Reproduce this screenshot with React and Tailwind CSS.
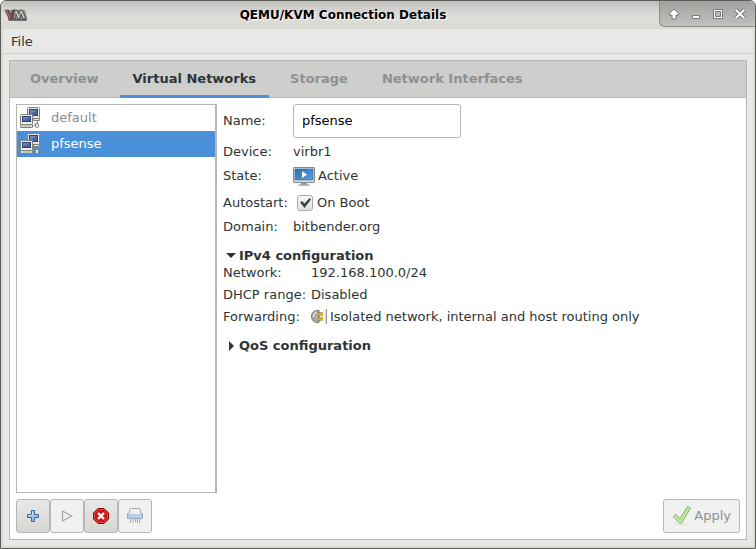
import React from "react";

function VmLogo() {
  return (
    <svg width="22" height="12" viewBox="0 0 22 12" className="shrink-0" aria-hidden="true">
      <path d="M3 11.500H22V8L20 1H1L3 7Z" fill="#9a9a98" />
      <path d="M0 1H3.500L5.500 6L7.500 1H10L7 10H4Z" fill="#7d4550" stroke="#444" strokeWidth=".6" />
      <path d="M1.500 1.500L5 9" stroke="#c08a94" strokeWidth=".8" />
      <path d="M8 10L9.500 1H12L13.500 5L14.500 1H17.500L21 10H18L16 5L15 10H13L11 5L10.500 10Z" fill="#a5a5a3" stroke="#3c3c3c" strokeWidth=".8" />
      <path d="M11 2L13.500 9M16 2L19 9" stroke="#e4e4e2" strokeWidth=".8" />
      <path d="M3.500 11H22" stroke="#333" />
    </svg>
  );
}

function NetworkIcon() {
  return (
    <svg width="22" height="22" viewBox="0 0 22 22" className="shrink-0" aria-hidden="true">
      <rect x="8.500" y=".5" width="12" height="11" rx="1" fill="#e6e6e2" stroke="#83837c" />
      <rect x="10.500" y="2.500" width="8" height="6" fill="#4a67a0" stroke="#2c4074" />
      <path d="M11 3H18L11 7Z" fill="#6d88b8" />
      <path d="M14.500 11.500H20.500V13.500H14.500Z" fill="#e6e6e2" stroke="#83837c" />
      <rect x="1.500" y="7.500" width="12" height="10" rx="1" fill="#f0f0ed" stroke="#83837c" />
      <rect x="3.500" y="9.500" width="8" height="5" fill="#4a67a0" stroke="#2c4074" />
      <path d="M4 10H11L4 13.500Z" fill="#6d88b8" />
      <path d="M1.500 17.500H13.500V20.500H1.500Z" fill="#e6e6e2" stroke="#83837c" />
      <path d="M3 19H12" stroke="#aaa" />
      <path d="M14.500 18.500H16.500V16.500H18.500V13.500" fill="none" stroke="#83837c" />
      <rect x="16.500" y="16.500" width="3" height="4" rx="1" fill="#e6e6e2" stroke="#83837c" />
    </svg>
  );
}

function ActiveIcon() {
  return (
    <svg width="22" height="22" viewBox="0 0 22 22" aria-hidden="true">
      <defs>
        <linearGradient id="screen" x2="1" y2="1">
          <stop stopColor="#266eb5" />
          <stop offset="1" stopColor="#5ca2dc" />
        </linearGradient>
      </defs>
      <rect x=".5" y="2.500" width="21" height="15" rx=".5" fill="#ddd" stroke="#888a85" />
      <rect x="2" y="4" width="18" height="11" fill="url(#screen)" stroke="#2f71ad" strokeWidth=".6" />
      <path d="M9 6L14 9.500L9 13Z" fill="#fff" />
      <path d="M8 18H14V19.500H8Z" fill="#999" />
      <path d="M5.500 20H16.500" stroke="#777" />
    </svg>
  );
}

function PlugIcon() {
  return (
    <svg width="16" height="16" viewBox="0 0 16 16" aria-hidden="true">
      <path d="M8 1.500V13.500H5.500Q.5 12.500 .5 7.500T5.500 1.500Z" fill="#a8a9a6" stroke="#777" />
      <path d="M5.500 3Q2.500 5 2.500 8" fill="none" stroke="#e4e4e4" strokeWidth="1.500" />
      <path d="M7 5H12M7 10H12" stroke="#746000" strokeWidth="3" />
      <path d="M7 5H12M7 10H12" stroke="#f0cf28" strokeWidth="1.500" />
      <path d="M13.500 0H16V15H13.500Z" fill="#e0e0e0" />
      <path d="M15.500 0V15" stroke="#999" />
    </svg>
  );
}

function AddIcon() {
  return (
    <svg width="16" height="16" viewBox="0 0 16 16" aria-hidden="true">
      <path d="M6.500 2.500H9.500V6.500H13.500V9.500H9.500V13.500H6.500V9.500H2.500V6.500H6.500Z" fill="#9dbee3" stroke="#3465a4" strokeLinejoin="round" />
      <path d="M7.500 3.500V7.500H3.500" fill="none" stroke="#d2e2f3" />
    </svg>
  );
}

function StartIcon() {
  return (
    <svg width="16" height="16" viewBox="0 0 16 16" aria-hidden="true">
      <path d="M3.500 3L13 8L3.500 13Z" fill="#eee" stroke="#a4a6a3" strokeWidth="1.200" strokeLinejoin="round" />
    </svg>
  );
}

function StopIcon() {
  return (
    <svg width="16" height="16" viewBox="0 0 16 16" aria-hidden="true">
      <path d="M5 .5H11L15.500 5V11L11 15.500H5L.5 11V5Z" fill="#cc1515" stroke="#930000" />
      <path d="M5.400 1.500H10.600L14.500 5.400V10.600L10.600 14.500H5.400L1.500 10.600V5.400Z" fill="none" stroke="#ef5555" strokeWidth=".8" />
      <path d="M5 5L11 11M11 5L5 11" stroke="#fff" strokeWidth="2.400" />
    </svg>
  );
}

function DeleteIcon() {
  return (
    <svg width="16" height="16" viewBox="0 0 16 16" aria-hidden="true">
      <path d="M2.500 6V1.500Q2.500 .5 3.500 .5H12.500Q13.500 .5 13.500 1.500V6" fill="#eee" stroke="#aaa" />
      <path d="M.5 5.500H15.500V10.500H.5Z" fill="#b9cce3" stroke="#8ca7c7" />
      <path d="M2 5.500H14" stroke="#e8eef5" />
      <path d="M3.500 10V14L2.500 15M6 10V15M8.500 10V14M10.500 10V15M12.500 10V14L13.500 15" fill="none" stroke="#aaa" />
    </svg>
  );
}

function ApplyIcon() {
  return (
    <svg width="20" height="20" viewBox="0 0 20 20" aria-hidden="true">
      <ellipse cx="10" cy="18" rx="8" ry="1.500" fill="#e6e6e6" />
      <path d="M1 10.500L4 8.500L8 12.500L15.500 .5L18.500 2L9.500 17H7.500Z" fill="#c8eba7" stroke="#87b565" strokeLinejoin="round" />
      <path d="M3.500 10.500L8.500 14.500L16 2.500" fill="none" stroke="#b1df88" />
    </svg>
  );
}

const winButton = "flex size-4 items-center justify-center";

function TitleBar() {
  return (
    <header className="flex h-7 shrink-0 items-center bg-linear-to-b from-[#c0bfbc] via-[#dedddb] to-[#dadad3] pl-1">
      <VmLogo />
      <h1 className="flex-1 text-center text-xs font-bold text-black [text-shadow:1px_1px_0_#fff]">QEMU/KVM Connection Details</h1>
      <div className="flex self-start">
        <div className="flex h-[26px] items-center gap-[6px] rounded-bl-md border-b border-l border-[#8c8c87] bg-linear-to-b from-[#a3a19f] to-[#c3c1be] pr-[7px] pl-[6px]">
          <button className={winButton} aria-label="Shade">
            <svg width="12" height="12" viewBox="0 0 12 12"><path d="M6 1L10.500 5.500V7H8V11H4V7H1.500V5.500Z" fill="#fff" stroke="#777" /></svg>
          </button>
          <button className={winButton} aria-label="Minimize">
            <svg width="12" height="12" viewBox="0 0 12 12"><path d="M2.500 7.500H9.500V10.500H2.500Z" fill="#fff" stroke="#777" /></svg>
          </button>
          <button className={winButton} aria-label="Maximize">
            <svg width="12" height="12" viewBox="0 0 12 12"><path d="M1.500 1.500H10.500V10.500H1.500Z" fill="#fff" stroke="#777" /><path d="M3.500 3.500H8.500V8.500H3.500Z" fill="#bbb" stroke="#777" /></svg>
          </button>
          <button className={winButton} aria-label="Close">
            <svg width="12" height="12" viewBox="0 0 12 12"><path d="M2 2L10 10M10 2L2 10" stroke="#777" strokeWidth="4" /><path d="M2 2L10 10M10 2L2 10" stroke="#fff" strokeWidth="2" /></svg>
          </button>
        </div>
      </div>
    </header>
  );
}

function Tabs() {
  const tabs = ["Overview", "Virtual Networks", "Storage", "Network Interfaces"];
  return (
    <div role="tablist" className="flex h-[37px] gap-2 bg-[#cececd] pl-[7px] shadow-[inset_0_-1px_0_#b5b5b3]">
      {tabs.map((tab, i) => (
        <button
          key={tab}
          role="tab"
          aria-selected={i === 1}
          className={
            i === 1
              ? "border-b-3 border-[#4a90d9] px-[13px] pt-px font-bold text-[#2e3436]"
              : "border-b-3 border-transparent px-[13px] pt-px font-bold text-[#8e9191]"
          }
        >
          {tab}
        </button>
      ))}
    </div>
  );
}

function NetworkList() {
  return (
    <div role="listbox" aria-label="Virtual networks" className="w-[201px] flex-1 border border-r-2 border-[#b6b6b3]">
      <div role="option" aria-selected="false" className="flex h-[26px] items-center gap-[10px] pl-[2px] text-[#8b8e8f]">
        <NetworkIcon />default
      </div>
      <div role="option" aria-selected="true" className="flex h-[26px] items-center gap-[10px] bg-[#4a90d9] pl-[2px] text-white">
        <NetworkIcon />pfsense
      </div>
    </div>
  );
}

const toolEnabled = "flex size-[34px] items-center justify-center rounded-[3px] border border-[#b6b6b3] bg-linear-to-b from-[#e8e8e7] to-[#d6d6d2]";
const toolDisabled = "flex size-[34px] items-center justify-center rounded-[3px] border border-[#b6b6b3] bg-[#f1f1f1]";

function Details() {
  return (
    <section className="min-w-0 flex-1 pl-[6px]">
      <div className="grid grid-cols-[65px_1fr] items-center gap-x-[5px]">
        <label htmlFor="name">Name:</label>
        <input id="name" defaultValue="pfsense" className="h-[34px] w-[168px] rounded-[3px] border border-[#b6b6b3] bg-white px-2 pb-[2px] text-black outline-none" />
      </div>
      <div className="mt-[6px] grid grid-cols-[65px_1fr] items-center gap-[5px]">
        <span>Device:</span>
        <span>virbr1</span>
        <span>State:</span>
        <span className="flex items-center gap-[3px]"><ActiveIcon />Active</span>
        <label htmlFor="autostart">Autostart:</label>
        <label className="flex h-[22px] items-center gap-1 pl-1">
          <span className="grid size-4">
            <input
              id="autostart"
              type="checkbox"
              defaultChecked
              className="peer col-start-1 row-start-1 size-4 appearance-none rounded-[3px] border border-[#a9a9a5] bg-linear-to-b from-[#f8f8f8] to-[#e2e2df]"
            />
            <svg width="16" height="16" viewBox="0 0 16 16" className="pointer-events-none invisible col-start-1 row-start-1 peer-checked:visible" aria-hidden="true">
              <path d="M3 7.500L5 6L7.500 8.500L12.500 3L14 4.500L7.500 13Z" fill="#3f4446" />
            </svg>
          </span>
          On Boot
        </label>
        <span>Domain:</span>
        <span>bitbender.org</span>
      </div>

      <button aria-expanded="true" className="mt-[13px] flex items-center gap-[2px] pl-[2px] font-bold">
        <svg width="12" height="12" viewBox="0 0 12 12" aria-hidden="true"><path d="M1 3H11L6 8Z" fill="#2e3436" /></svg>
        IPv4 configuration
      </button>
      <div className="mt-px grid grid-cols-[82px_1fr] items-center gap-[6px]">
        <span className="whitespace-nowrap">Network:</span>
        <span>192.168.100.0/24</span>
        <span className="whitespace-nowrap">DHCP range:</span>
        <span>Disabled</span>
        <span className="whitespace-nowrap">Forwarding:</span>
        <span className="flex items-center gap-[3px]"><PlugIcon />Isolated network, internal and host routing only</span>
      </div>
      <button aria-expanded="false" className="mt-[13px] flex items-center gap-[2px] pl-[2px] font-bold">
        <svg width="12" height="12" viewBox="0 0 12 12" aria-hidden="true"><path d="M4 1L9 6L4 11Z" fill="#2e3436" /></svg>
        QoS configuration
      </button>
    </section>
  );
}

export default function App() {
  return (
    <div className="flex min-h-screen flex-col overflow-hidden rounded-t-md border border-[#5c5c58] bg-[#dadad3] font-['DejaVu_Sans',sans-serif] text-[13px] leading-4 text-[#2e3436]">
      <TitleBar />
      <div className="mx-[2px] mb-[2px] flex flex-1 flex-col bg-[#e8e8e7]">
        <nav className="h-[25px] border-b border-[#cfcfcd] px-2 pt-[5px]">
          <button>File</button>
        </nav>
        <main className="mx-[6px] mt-[6px] mb-[6px] flex flex-1 flex-col border border-[#b6b6b3] bg-white">
          <Tabs />
          <div className="flex flex-1 flex-col p-[6px]">
            <div className="flex flex-1">
              <div className="flex flex-col"><NetworkList /></div>
              <Details />
            </div>
            <div className="mt-[6px] flex">
              <button className={toolEnabled} aria-label="Add network"><AddIcon /></button>
              <button className={toolDisabled} aria-label="Start network" disabled><StartIcon /></button>
              <button className={toolEnabled} aria-label="Stop network"><StopIcon /></button>
              <button className={toolDisabled} aria-label="Delete network" disabled><DeleteIcon /></button>
              <button disabled className="ml-auto flex h-[34px] items-center gap-[2px] rounded-[3px] border border-[#b6b6b3] bg-[#f1f1f1] px-2 text-[#8e9191]">
                <ApplyIcon />Apply
              </button>
            </div>
          </div>
        </main>
      </div>
    </div>
  );
}
